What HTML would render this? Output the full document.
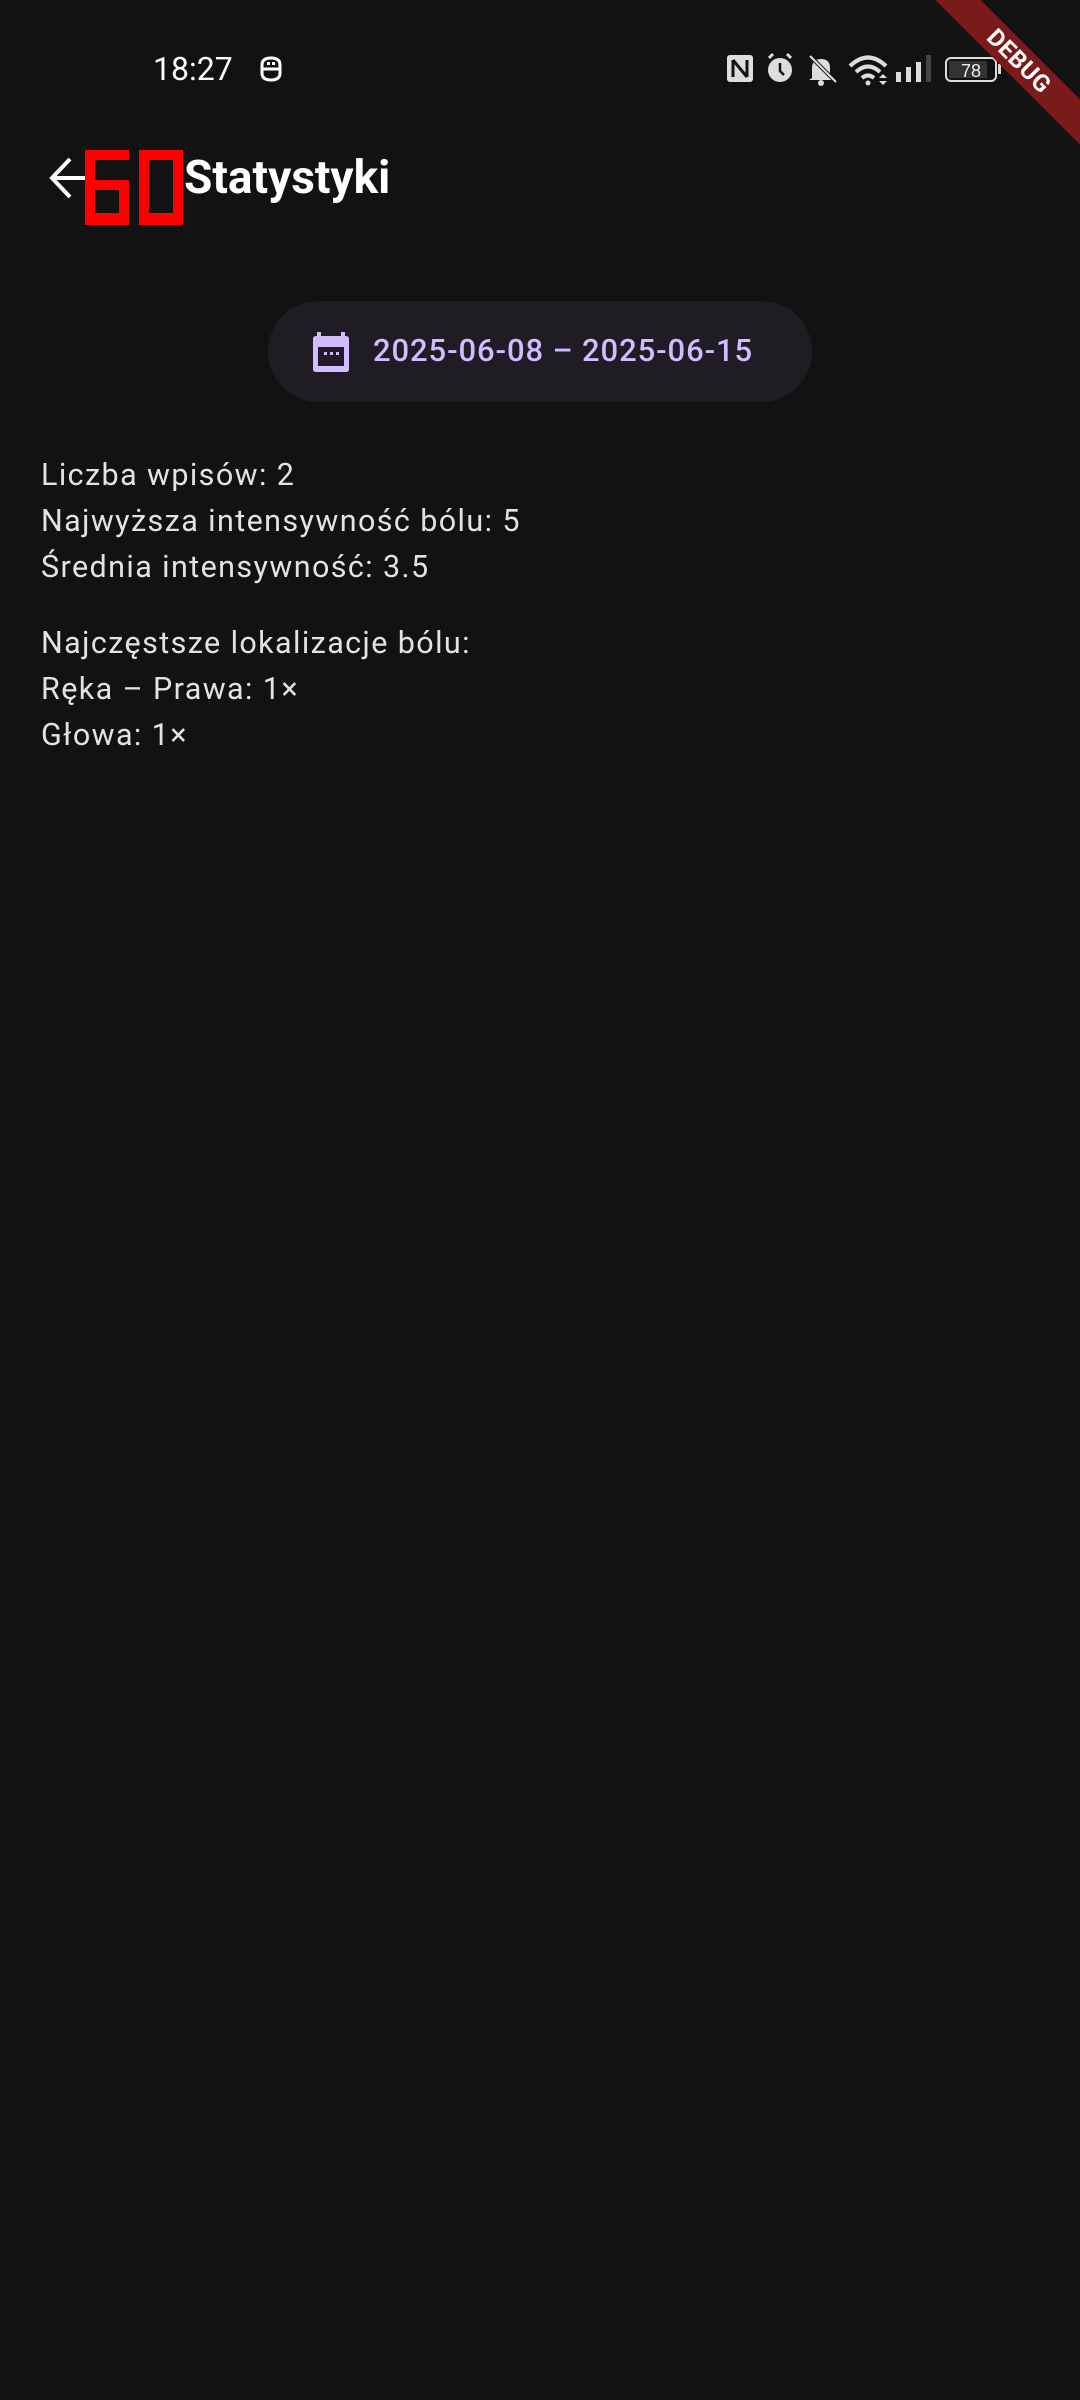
<!DOCTYPE html>
<html><head><meta charset="utf-8">
<style>
html,body{margin:0;padding:0;}
body{width:1080px;height:2400px;background:#121212;position:relative;overflow:hidden;font-family:"Roboto","Liberation Sans",sans-serif;}
.abs{position:absolute;}
.time{left:153px;top:50px;font-size:32px;color:#fff;letter-spacing:0px;}
.title{left:184px;top:151px;font-size:46px;font-weight:bold;color:#fff;letter-spacing:0px;}
.pill{left:268px;top:301px;width:544px;height:101px;border-radius:51px;background:#1f1c24;}
.date{left:373px;top:332px;font-size:31px;font-weight:500;color:#d0bcff;letter-spacing:0.9px;}
.body{left:41px;color:#e6e1e5;font-size:30.5px;letter-spacing:1.4px;line-height:46px;}
.banner{left:869px;top:45px;width:300px;height:32px;background:#7b1a1a;transform:rotate(45deg);color:#fff;font-weight:bold;font-size:24px;text-align:center;line-height:32px;letter-spacing:0.5px;}
</style></head><body>
<div class="abs time">18:27</div>
<svg class="abs" style="left:258px;top:55px" width="26" height="28" viewBox="0 0 26 28">
<path d="M4 10 Q4 3 13 3 Q22 3 22 10 L22 18 Q22 25 13 25 Q4 25 4 18 Z" fill="none" stroke="#fff" stroke-width="3"/>
<line x1="4" y1="14" x2="22" y2="14" stroke="#fff" stroke-width="3"/>
<rect x="9" y="7" width="3" height="3" fill="#fff"/><rect x="14" y="7" width="3" height="3" fill="#fff"/>
</svg>
<svg class="abs" style="left:720px;top:50px" width="290" height="40" viewBox="0 0 290 40">
<rect x="7" y="5" width="26" height="27" rx="3" fill="#ddd"/>
<path d="M13 10 V27 M13 10 L27 27 M27 10 V27" stroke="#121212" stroke-width="3" fill="none"/>
<circle cx="60" cy="20" r="12" fill="#ddd"/>
<path d="M49 8 L53 4 M71 8 L67 4" stroke="#ddd" stroke-width="3"/>
<path d="M60 13 V21 L64 25" stroke="#121212" stroke-width="2.5" fill="none"/>
<path d="M92 28 L92 18 Q92 9 101 9 Q110 9 110 18 L110 28 L113 30 L89 30 Z" fill="#ddd"/>
<circle cx="101" cy="33" r="3" fill="#ddd"/>
<line x1="90" y1="6" x2="116" y2="32" stroke="#121212" stroke-width="4"/>
<line x1="90" y1="6" x2="116" y2="32" stroke="#ddd" stroke-width="2"/>
<path d="M130 16 Q148 -1 166 16" stroke="#ddd" stroke-width="4" fill="none"/>
<path d="M136 22 Q148 11 160 22" stroke="#ddd" stroke-width="4" fill="none"/>
<path d="M142 28 Q148 23 154 28" stroke="#ddd" stroke-width="4" fill="none"/>
<circle cx="148" cy="33" r="2.5" fill="#ddd"/>
<path d="M159 28 L163 24 L167 28 Z M159 31 L167 31 L163 35 Z" fill="#ddd"/>
<rect x="176" y="22" width="5" height="10" fill="#ddd"/><rect x="186" y="17" width="5" height="15" fill="#ddd"/><rect x="196" y="12" width="5" height="20" fill="#ddd"/><rect x="206" y="5" width="5" height="27" fill="#444"/>
<rect x="226" y="8" width="50" height="23" rx="5" fill="none" stroke="#ddd" stroke-width="2"/>
<rect x="229" y="11" width="38" height="17" fill="#333"/>
<rect x="278" y="14" width="3" height="10" fill="#ddd"/>
<text x="251" y="27" text-anchor="middle" font-size="18" fill="#eee" font-family="Liberation Sans">78</text>
</svg>
<div class="abs banner">DEBUG</div>
<svg class="abs" style="left:46px;top:155px" width="50" height="46" viewBox="0 0 50 46">
<path d="M24 4 L6 23 L24 42 M6 23 H46" stroke="#fff" stroke-width="4" fill="none"/>
</svg>
<svg class="abs" style="left:85px;top:150px" width="100" height="76" viewBox="0 0 100 76">
<path d="M0 0 H44 V10 H10 V30 H44 V75 H0 Z M10 40 V63 H34 V40 Z" fill="#ff0000" fill-rule="evenodd"/>
<path d="M54 0 H98 V75 H54 Z M64 10 V63 H88 V10 Z" fill="#ff0000" fill-rule="evenodd"/>
</svg>
<div class="abs title">Statystyki</div>
<div class="abs pill"></div>
<svg class="abs" style="left:312px;top:332px" width="38" height="42" viewBox="0 0 38 42">
<rect x="5" y="0" width="4" height="6" fill="#d0bcff"/><rect x="29" y="0" width="4" height="6" fill="#d0bcff"/>
<path d="M4 4 H34 Q37 4 37 7 V37 Q37 40 34 40 H4 Q1 40 1 37 V7 Q1 4 4 4 Z M6 15 V34 H32 V15 Z" fill="#d0bcff" fill-rule="evenodd"/>
<rect x="12" y="20" width="3" height="3" fill="#d0bcff"/><rect x="18" y="20" width="3" height="3" fill="#d0bcff"/><rect x="24" y="20" width="3" height="3" fill="#d0bcff"/>
</svg>
<div class="abs date">2025-06-08 – 2025-06-15</div>
<div class="abs body" style="top:453px">Liczba wpisów: 2<br>Najwyższa intensywność bólu: 5<br>Średnia intensywność: 3.5</div>
<div class="abs body" style="top:621px">Najczęstsze lokalizacje bólu:<br>Ręka – Prawa: 1×<br>Głowa: 1×</div>
</body></html>
